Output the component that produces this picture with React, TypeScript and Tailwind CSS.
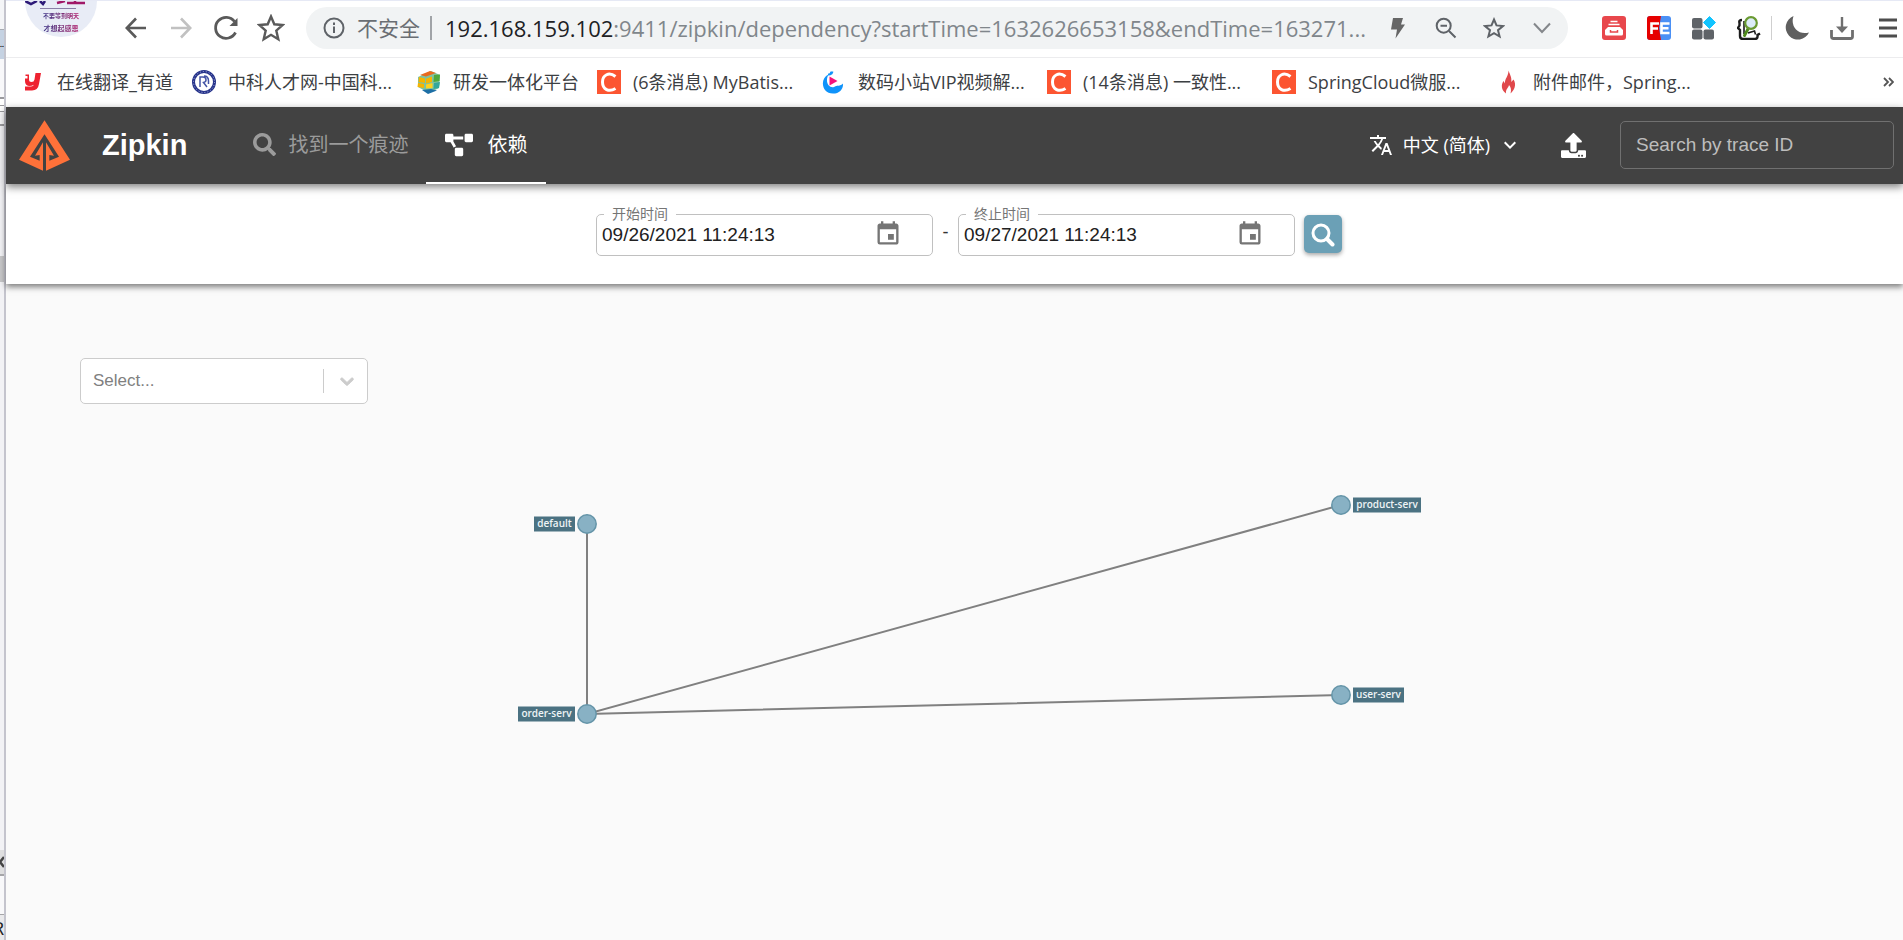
import React from "react";
import { FaSearch, FaProjectDiagram, FaUpload } from "react-icons/fa";
import { MdTranslate, MdExpandMore, MdEvent } from "react-icons/md";

const CJK = "font-['Open_Sans','Noto_Sans_CJK_SC',sans-serif]";
const ARIAL = "font-['Liberation_Sans','Noto_Sans_CJK_SC',sans-serif]";

function WindowEdge() {
  return (
    <div className="flex w-1.5 shrink-0 flex-col overflow-hidden border-r-2 border-[#c4c4cd] bg-[#f2f2f5]">
      <div className="h-[30px] shrink-0 border-b border-[#a9adb3] bg-[#f4f5f7]" />
      <div className="flex h-[29px] shrink-0 items-center bg-[#c5d2e2] font-['Liberation_Sans',sans-serif] text-[7px] leading-none font-bold text-black">
        ..
      </div>
      <div className="h-10 shrink-0 border-b-2 border-[#9a9a9e] bg-[#f8f8fa]" />
      <div className="h-[7px] shrink-0 border-b border-[#9a9a9e] bg-white" />
      <div className="h-1.5 shrink-0 border-b border-[#9a9a9e] bg-white" />
      <div className="h-3.5 shrink-0 border-b-2 border-[#9a9a9e] bg-[#f8f8fa]" />
      <div className="h-[130px] shrink-0" />
      <div className="h-[26px] shrink-0 bg-[#c6c6c8]" />
      <div className="flex-1" />
      <div className="flex h-[26px] shrink-0 items-center justify-end border-b-2 border-[#a5a5a8] bg-[#dededf]">
        <svg className="h-3 w-1" viewBox="0 0 4 12">
          <path d="M4 1L0 6L4 11" fill="none" stroke="#444" strokeWidth="2.5" />
        </svg>
      </div>
      <div className="h-[39px] shrink-0 border-b border-[#a5a5a8] bg-[#f8f8fa]" />
      <div className="flex h-[25px] shrink-0 items-end justify-end bg-[#e9e9eb] font-['Open_Sans',sans-serif] text-lg leading-6 text-[#222]">
        R
      </div>
    </div>
  );
}

function Avatar() {
  return (
    <div className="absolute top-0 left-[19px] h-9 w-[72px] overflow-hidden rounded-b-full bg-[#e8ecf6]">
      <svg className="absolute top-0 left-0" width="72" height="8" viewBox="0 0 72 8">
        <path d="M0 0L6 3L12 0M15 0L18 3L20 0" fill="none" stroke="#2d1a78" strokeWidth="2.5" />
        <path d="M32 2L40 0M42 2H60M50 0V2" fill="none" stroke="#a01868" strokeWidth="2.5" />
        <path d="M15 7.500H51" stroke="#8a7fa8" strokeWidth="1" />
      </svg>
      <div className="flex flex-col items-center bg-linear-to-r from-[#2b2c86] from-20% to-[#b0156a] to-75% bg-clip-text pt-[9px] font-['Noto_Sans_CJK_SC',sans-serif] leading-3 font-bold text-transparent">
        <span className="text-[6px] leading-3">不要等到明天</span>
        <span className="text-[7px] leading-3">才想起感恩</span>
      </div>
    </div>
  );
}

function BarButton({ label, children, className = "w-[45px] justify-center" }: { label: string; children: React.ReactNode; className?: string }) {
  return (
    <button type="button" aria-label={label} className={`flex h-10 shrink-0 items-center ${className}`}>
      {children}
    </button>
  );
}

const line = { fill: "none", stroke: "#5f6368", strokeWidth: 2 };

function Toolbar() {
  return (
    <div className="relative flex h-[58px] items-center border-t border-b border-t-[#e6e9f5] border-b-[#ececee] bg-white pb-0.5 pl-[107px]">
      <Avatar />
      <BarButton label="后退">
        <svg width="22" height="22" viewBox="0 0 22 22"><path d="M21 11H2M11 1.500L1.800 11L11 20.500" fill="none" stroke="#5a5a5a" strokeWidth="2.600" /></svg>
      </BarButton>
      <BarButton label="前进">
        <svg width="22" height="22" viewBox="0 0 22 22"><path d="M1 11H20M11 1.500L20.200 11L11 20.500" fill="none" stroke="#c1c1c1" strokeWidth="2.600" /></svg>
      </BarButton>
      <BarButton label="刷新">
        <svg width="26" height="26" viewBox="0 0 26 26">
          <path d="M22.500 17.500A10.500 10.500 0 1 1 21.500 6.500" fill="none" stroke="#5a5a5a" strokeWidth="2.800" />
          <path d="M24.500 3V11H16.500Z" fill="#5a5a5a" />
        </svg>
      </BarButton>
      <BarButton label="收藏">
        <svg width="28" height="28" viewBox="0 0 28 28"><path d="M14 2.500L17.300 10.300L25.700 11L19.300 16.600L21.300 25.300L14 20.800L6.700 25.300L8.700 16.600L2.300 11L10.700 10.300Z" fill="none" stroke="#5a5a5a" strokeWidth="2.400" /></svg>
      </BarButton>

      <div className="ml-[13px] flex h-[42px] min-w-0 flex-1 items-center rounded-full bg-[#f1f3f4] pr-0.5 pl-[17px]">
        <svg className="shrink-0" width="22" height="22" viewBox="0 0 22 22">
          <circle cx="11" cy="11" r="9.500" {...line} />
          <path d="M11 9.500V16M11 5.500V8" {...line} />
        </svg>
        <span className={`ml-3 shrink-0 text-[21px] leading-8 text-[#6a6e73] ${CJK}`}>不安全</span>
        <span className="ml-2.5 h-6 w-0.5 shrink-0 bg-[#a0a3a7]" />
        <span className={`ml-[13px] min-w-0 flex-1 truncate text-[22px] leading-8 text-[#80868b] ${CJK}`}>
          <span className="text-[#202124]">192.168.159.102</span>:9411/zipkin/dependency?startTime=1632626653158&amp;endTime=163271...
        </span>
        <BarButton label="加速" className="w-12 justify-center">
          <svg width="14" height="22" viewBox="0 0 14 22"><path d="M2 1H12L10 7.500H14L4.500 21.500L6 12.500H0Z" fill="#666" /></svg>
        </BarButton>
        <BarButton label="缩放" className="w-12 justify-center">
          <svg width="22" height="22" viewBox="0 0 22 22"><circle cx="8.700" cy="8.700" r="7" {...line} /><path d="M5.500 8.700H12M14 14L20.500 20.500" {...line} /></svg>
        </BarButton>
        <BarButton label="添加书签" className="w-12 justify-center">
          <svg width="22" height="22" viewBox="0 0 22 22"><path d="M11 2.500L13.500 8.400L20 9L15 13.200L16.600 19.500L11 16.200L5.400 19.500L7 13.200L2 9L8.500 8.400Z" {...line} /></svg>
        </BarButton>
        <BarButton label="展开" className="w-12 justify-center">
          <svg width="18" height="12" viewBox="0 0 18 12"><path d="M1 1.500L9 10L17 1.500" fill="none" stroke="#84878b" strokeWidth="2" /></svg>
        </BarButton>
      </div>

      <div className="ml-[23px] flex items-center">
        <BarButton label="收纳">
          <svg width="24" height="24" viewBox="0 0 24 24">
            <rect width="24" height="24" rx="3" fill="#e8474c" />
            <path d="M8.500 5.500H15.500M6.500 8.500H17.500" stroke="#fff" strokeWidth="1.500" />
            <path d="M6 11H18L21 14V18Q21 19.500 19.500 19.500H4.500Q3 19.500 3 18V14Z" fill="#fff" />
            <path d="M8.500 14V16H15.500V14" fill="none" stroke="#e8474c" strokeWidth="1.500" />
          </svg>
        </BarButton>
        <BarButton label="FE 助手">
          <svg width="24" height="24" viewBox="0 0 24 24">
            <rect width="24" height="24" rx="3" fill="#4a90f5" />
            <path d="M3 0H14L12 12L14 24H3Q0 24 0 21V3Q0 0 3 0Z" fill="#e60000" />
            <path d="M4.500 18V7.500H12M4.500 12.500H11M22.500 7.500H14.500V17H22.500M14.500 12.300H21.500" fill="none" stroke="#fff" strokeWidth="2.600" />
          </svg>
        </BarButton>
        <BarButton label="扩展程序">
          <svg width="24" height="24" viewBox="0 0 24 24">
            <g fill="#5f6368"><rect x="0" y="2" width="10.500" height="10.500" rx="2" /><rect x="0" y="13.500" width="10.500" height="10" rx="2" /><rect x="11.500" y="13.500" width="10.500" height="10" rx="2" /></g>
            <path d="M17.500 0.500L23.500 6.500L17.500 12.500L11.500 6.500Z" fill="#12c4ff" stroke="#12c4ff" strokeLinejoin="round" />
          </svg>
        </BarButton>
        <BarButton label="查找">
          <svg width="24" height="24" viewBox="0 0 24 24">
            <path d="M5 4Q1.500 4 2.500 7V9.500L1 12L3 14V20Q3 23 6 23H18Q21 23 20.500 19L23 17.500" fill="none" stroke="#1c1c1c" strokeWidth="2.400" />
            <path d="M7 5V18M11 17L17.500 15L18.500 18.500" fill="none" stroke="#1c1c1c" strokeWidth="1.600" />
            <path d="M11.500 12L7.500 19.500" stroke="#4f8a1c" strokeWidth="3" strokeLinecap="round" />
            <circle cx="14" cy="7" r="5.800" fill="#dcecf8" stroke="#6a9a32" strokeWidth="2.200" />
          </svg>
        </BarButton>
        <span className="h-6 w-px bg-[#cfcfcf]" />
        <BarButton label="夜间模式" className="ml-0.5 w-[45px] justify-center">
          <svg width="24" height="24" viewBox="0 0 24 24"><path d="M8.500 0A12.200 12.200 0 1 0 24 16.500Q16 18.500 11 13.500Q6 8 8.500 0Z" fill="#5f5f5f" /></svg>
        </BarButton>
        <BarButton label="下载">
          <svg width="24" height="24" viewBox="0 0 24 24">
            <path d="M1.500 14V20.500Q1.500 22.500 3.500 22.500H20.500Q22.500 22.500 22.500 20.500V14" fill="none" stroke="#6f6f6f" strokeWidth="2.800" />
            <path d="M12 1V13" stroke="#6f6f6f" strokeWidth="2.400" /><path d="M6 10.500H18L12 17Z" fill="#6f6f6f" />
          </svg>
        </BarButton>
        <BarButton label="菜单" className="w-[39px] justify-end pr-1.5">
          <svg width="18" height="20" viewBox="0 0 18 20"><path d="M0 2H18M0 10H18M0 18H18" stroke="#4d4d4d" strokeWidth="2.800" /></svg>
        </BarButton>
      </div>
    </div>
  );
}

const Csdn = () => (
  <svg width="24" height="24" viewBox="0 0 24 24">
    <rect width="24" height="24" fill="#fc5531" />
    <path d="M18.500 6.500C12 1.500 5.500 5 5.500 12C5.500 19.500 12 22.500 18.500 18.500" fill="none" stroke="#fff" strokeWidth="3" />
  </svg>
);

const Youdao = () => (
  <svg width="24" height="24" viewBox="0 0 24 24">
    <path d="M4.500 4.500H8V9.500Q8 12 10.500 12Q13 12 13.500 9.500L14.500 3H20L18 14Q17 20.500 11 20.500H4V16.500H10Q12.500 16.500 12.800 14.800Q11 16 8 16Q4 15.500 4 11V8.500H6.500V6H4.500Z" fill="#ee2230" />
  </svg>
);

const Seal = () => (
  <svg width="24" height="24" viewBox="0 0 24 24">
    <circle cx="12" cy="12" r="10.500" fill="#fff" stroke="#27348b" strokeWidth="3" />
    <circle cx="12" cy="12" r="10.500" fill="none" stroke="#aab2e0" strokeWidth="1" strokeDasharray="1 2" />
    <path d="M8 17V7H11Q14 7 14 10Q14 12 11.500 12.500L15 17M12 6Q16.500 6 16.500 11V14" fill="none" stroke="#4454a5" strokeWidth="1.500" />
  </svg>
);

const Cube = () => (
  <svg width="24" height="24" viewBox="0 0 24 24">
    <path d="M1 7L14 1L23 5L22 18L12 23L1 17Z" fill="#7fc3a0" />
    <path d="M3 5L13 1L19 3L9 6.500Z" fill="#e86a1e" />
    <path d="M2 7L8 8.500V13L1.500 12ZM9 8.800L15 6.500V12L9 13.500ZM1 13L7 14V18L0.500 17Z" fill="#f7b500" />
    <path d="M9 14.500L15.500 13V18L9 18.500Z" fill="#ffd21f" />
    <path d="M17 5L23 4.500L22.500 11L16.500 12Z" fill="#4ea83c" />
    <path d="M17 13L23 12L22 18L16.500 19Z" fill="#35a79c" />
    <path d="M5 20L14 19L20 20.500L11 24Z" fill="#1d6fa5" />
  </svg>
);

const Whale = () => (
  <svg width="24" height="24" viewBox="0 0 24 24">
    <path d="M6.500 4.500C-2.500 8.500 -0.500 23.500 11 23.500C17.500 23.500 21.500 19 21 13.500C18.500 16.500 14.500 15 12 17C7 18.500 2.500 12 6.500 4.500Z" fill="#0f93fa" />
    <path d="M6 4.500Q9.500 5 10.500 1.500M10.500 3.500L8 2.500" fill="none" stroke="#0f93fa" strokeWidth="2" />
    <path d="M7.500 6.500L15.500 11L7.500 15.500Z" fill="#f5127b" />
  </svg>
);

const Flame = () => (
  <svg width="24" height="24" viewBox="0 0 24 24">
    <path d="M11.500 0.500C12.500 4 15 7 14.300 12L16.500 9.500C20 15 17 20.500 13.500 23.500C14.500 20 14 17 12 15C11.500 18 8.500 19 9 23.500C4 20 4 14.500 6.500 11L8 13.500C7.500 8.500 11.500 6.500 11.500 0.500Z" fill="#e0484b" />
  </svg>
);

const bookmarks: { icon: React.FC; text: string; width: string }[] = [
  { icon: Youdao, text: "在线翻译_有道", width: "w-[171px]" },
  { icon: Seal, text: "中科人才网-中国科...", width: "w-[225px]" },
  { icon: Cube, text: "研发一体化平台", width: "w-[180px]" },
  { icon: Csdn, text: "(6条消息) MyBatis...", width: "w-[225px]" },
  { icon: Whale, text: "数码小站VIP视频解...", width: "w-[225px]" },
  { icon: Csdn, text: "(14条消息) 一致性...", width: "w-[225px]" },
  { icon: Csdn, text: "SpringCloud微服...", width: "w-[225px]" },
  { icon: Flame, text: "附件邮件，Spring...", width: "w-[225px]" },
];

function Bookmarks() {
  return (
    <nav className={`flex h-[49px] items-center bg-white pr-[9px] pb-0.5 pl-[15px] text-lg leading-6 text-[#3c4043] ${CJK}`}>
      <div className="flex min-w-0 flex-1 overflow-hidden">
        {bookmarks.map(({ icon: Icon, text, width }) => (
          <a key={text} href="#" className={`flex shrink-0 items-center gap-3 whitespace-nowrap ${width}`}>
            <Icon />
            {text}
          </a>
        ))}
      </div>
      <button type="button" aria-label="更多书签">
        <svg width="11" height="10" viewBox="0 0 11 10"><path d="M1 1L5 5L1 9M6 1L10 5L6 9" fill="none" stroke="#555" strokeWidth="1.800" /></svg>
      </button>
    </nav>
  );
}

function ZipkinLogo() {
  return (
    <svg className="shrink-0" width="51" height="51" viewBox="57 362 153 151">
      <path fill="#fe7139" d="M133.500 362L57 480L129 513V428L105 468L119 466V483L90 471L133.500 404L177 471L148 483V466L162 468L138 428V513L210 480Z" />
    </svg>
  );
}

function AppHeader() {
  return (
    <header className={`relative z-20 flex h-[77px] items-center bg-[#424242] pr-[9px] pl-[13px] text-white shadow-[0_3px_8px_rgba(0,0,0,0.5)] ${ARIAL}`}>
      <ZipkinLogo />
      <h1 className="ml-8 pb-0.5 text-[29px] leading-9 font-bold">Zipkin</h1>
      <nav className="ml-12 flex self-stretch text-xl">
        <a href="#" className="flex items-center gap-3 border-b-2 border-transparent px-[18px] text-[#9b9b9b]">
          <FaSearch size={23} />
          找到一个痕迹
        </a>
        <a href="#" aria-current="page" className="flex items-center gap-3.5 border-b-2 border-white px-[19px]">
          <FaProjectDiagram size={28} />
          依赖
        </a>
      </nav>
      <button type="button" className={`ml-auto flex items-center pb-0.5 text-lg leading-6 ${CJK}`}>
        <MdTranslate size={24} />
        <span className="mr-2 ml-2.5">中文 (简体)</span>
        <MdExpandMore size={24} />
      </button>
      <button type="button" aria-label="上传" className="ml-[39px]">
        <FaUpload size={25} />
      </button>
      <input
        type="text"
        aria-label="Search by trace ID"
        placeholder="Search by trace ID"
        className="mb-0.5 ml-[34px] h-12 w-[274px] rounded-[5px] border border-[#707070] bg-transparent px-[15px] text-[19px] placeholder:text-[#bdbdbd]"
      />
    </header>
  );
}

function DateField({ id, label, value }: { id: string; label: string; value: string }) {
  return (
    <fieldset className="flex h-12 w-[337px] items-center rounded-[5px] border border-[#c0c0c0] pl-[5px]">
      <legend className={`ml-0.5 h-3 px-2 text-sm leading-3 text-[#757575] ${CJK}`}>
        <label htmlFor={id}>{label}</label>
      </legend>
      <div className="flex h-9 items-start">
        <input id={id} type="text" defaultValue={value} className="w-[272px] pt-px text-[19px] leading-7 text-[#212121]" />
        <button type="button" aria-label={label} className="text-[#757575]">
          <MdEvent size={28} />
        </button>
      </div>
    </fieldset>
  );
}

function DateBar() {
  return (
    <section className={`relative z-10 flex h-[100px] items-start justify-center bg-white pt-6 pl-[29px] shadow-[0_3px_6px_rgba(0,0,0,0.5)] ${ARIAL}`}>
      <DateField id="start" label="开始时间" value="09/26/2021 11:24:13" />
      <span className="w-[25px] pt-2.5 text-center text-lg text-[#333]">-</span>
      <DateField id="end" label="终止时间" value="09/27/2021 11:24:13" />
      <button
        type="button"
        aria-label="查询"
        className="mt-[7px] ml-[9px] flex h-[38px] w-[38px] items-center justify-center rounded-[5px] bg-[#6ba0b6] text-white shadow-[0_2px_4px_rgba(0,0,0,0.35)]"
      >
        <svg className="mt-0.5" width="24" height="24" viewBox="0 0 24 24" fill="none" stroke="currentColor">
          <circle cx="10" cy="10" r="8" strokeWidth="3" />
          <path d="M16 16L21.500 21.500" strokeWidth="4" strokeLinecap="round" />
        </svg>
      </button>
    </section>
  );
}

const nodes = [
  { name: "default", x: 581, y: 120, lx: 528, w: 41 },
  { name: "order-serv", x: 581, y: 310, lx: 512, w: 57 },
  { name: "product-serv", x: 1335, y: 101, lx: 1347, w: 68 },
  { name: "user-serv", x: 1335, y: 291, lx: 1347, w: 51 },
];

function DependencyGraph() {
  return (
    <svg className="block w-full" viewBox="0 0 1897 536">
      <path d="M581 120V310L1335 101M581 310L1335 291" fill="none" stroke="#808080" strokeWidth="2" />
      {nodes.map((n) => (
        <g key={n.name}>
          <circle cx={n.x} cy={n.y} r="9.200" fill="#88b1c4" stroke="#6494a8" strokeWidth="1.500" />
          <rect x={n.lx} y={n.y - 7.5} width={n.w} height="15" fill="#4b7282" />
          <text
            x={n.lx + n.w / 2}
            y={n.y + 3}
            textAnchor="middle"
            fill="#eef4f6"
            className="font-['Open_Sans',sans-serif] text-[10px] font-semibold"
          >
            {n.name}
          </text>
        </g>
      ))}
    </svg>
  );
}

export default function App() {
  return (
    <div className="flex min-h-screen bg-[#fafafa]">
      <WindowEdge />
      <div className="flex min-w-0 flex-1 flex-col">
        <Toolbar />
        <Bookmarks />
        <AppHeader />
        <DateBar />
        <main className={`flex-1 pt-[74px] ${ARIAL}`}>
          <div className="ml-[74px] flex h-[46px] w-[288px] items-center rounded-[5px] border border-[#cccccc] bg-white">
            <select aria-label="Select..." className="h-full flex-1 appearance-none bg-transparent pl-3 text-[17px] text-[#808080]">
              <option>Select...</option>
            </select>
            <span className="h-6 w-px bg-[#cccccc]" />
            <svg className="mr-[9px] ml-3 text-[#cccccc]" width="22" height="22" viewBox="0 0 20 20" fill="currentColor" stroke="currentColor" strokeWidth="0.8">
              <path d="M4.516 7.548c0.436-0.446 1.043-0.481 1.576 0l3.908 3.747 3.908-3.747c0.533-0.481 1.141-0.446 1.574 0 0.436 0.445 0.408 1.197 0 1.615-0.406 0.418-4.695 4.502-4.695 4.502-0.217 0.223-0.502 0.335-0.787 0.335s-0.570-0.112-0.789-0.335c0 0-4.287-4.084-4.695-4.502s-0.436-1.170 0-1.615z" />
            </svg>
          </div>
          <DependencyGraph />
        </main>
      </div>
    </div>
  );
}
